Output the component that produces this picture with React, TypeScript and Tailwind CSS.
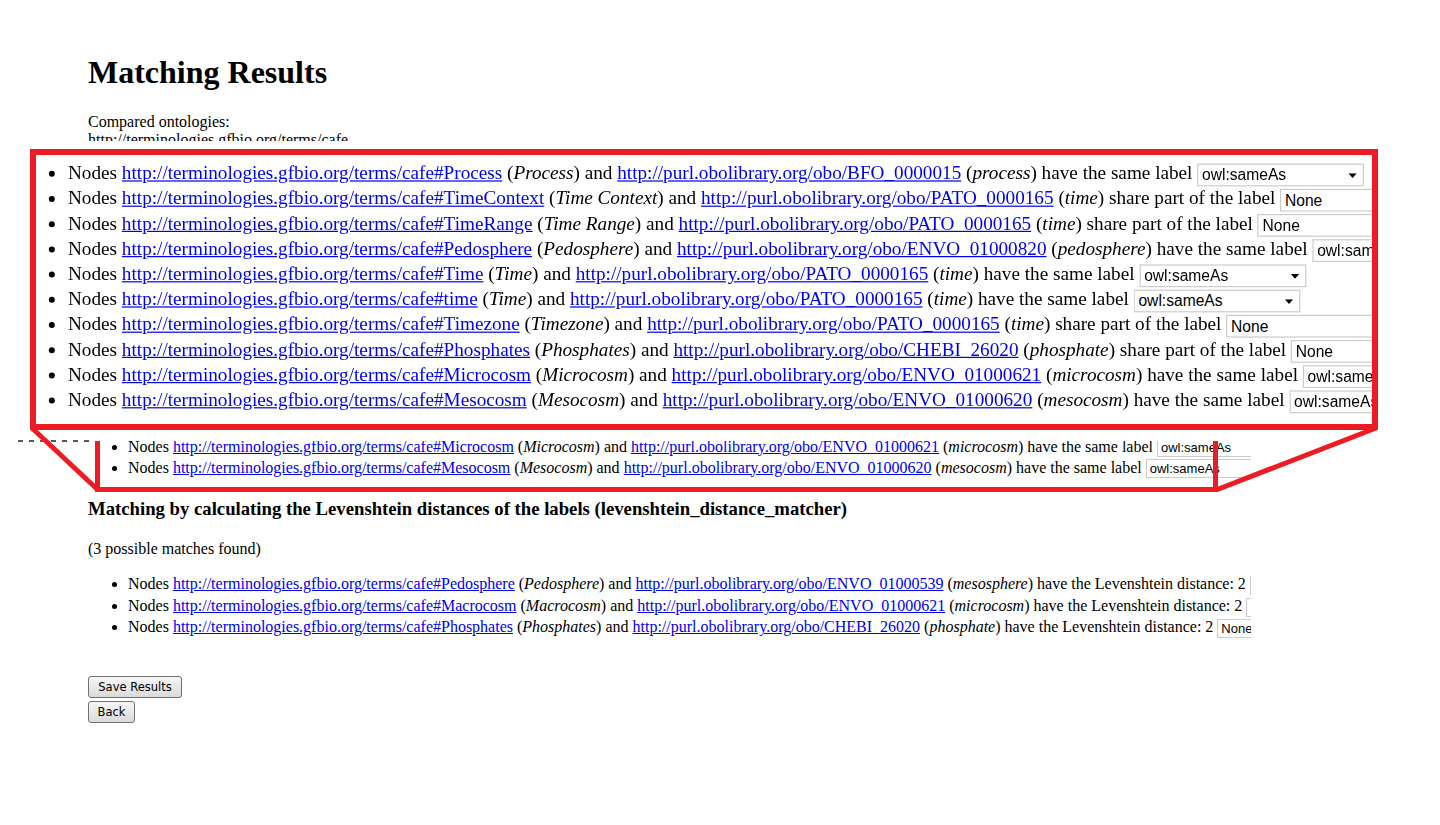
import React from 'react'

const CAFE = 'http://terminologies.gfbio.org/terms/cafe#'
const OBO = 'http://purl.obolibrary.org/obo/'

type Match = {
  id: string
  label: string
  target: string
  tlabel: string
  text: string
  value: string
}

const labelMatches: Match[] = [
  { id: 'Process', label: 'Process', target: 'BFO_0000015', tlabel: 'process', text: 'have the same label', value: 'owl:sameAs' },
  { id: 'TimeContext', label: 'Time Context', target: 'PATO_0000165', tlabel: 'time', text: 'share part of the label', value: 'None' },
  { id: 'TimeRange', label: 'Time Range', target: 'PATO_0000165', tlabel: 'time', text: 'share part of the label', value: 'None' },
  { id: 'Pedosphere', label: 'Pedosphere', target: 'ENVO_01000820', tlabel: 'pedosphere', text: 'have the same label', value: 'owl:sameAs' },
  { id: 'Time', label: 'Time', target: 'PATO_0000165', tlabel: 'time', text: 'have the same label', value: 'owl:sameAs' },
  { id: 'time', label: 'Time', target: 'PATO_0000165', tlabel: 'time', text: 'have the same label', value: 'owl:sameAs' },
  { id: 'Timezone', label: 'Timezone', target: 'PATO_0000165', tlabel: 'time', text: 'share part of the label', value: 'None' },
  { id: 'Phosphates', label: 'Phosphates', target: 'CHEBI_26020', tlabel: 'phosphate', text: 'share part of the label', value: 'None' },
  { id: 'Microcosm', label: 'Microcosm', target: 'ENVO_01000621', tlabel: 'microcosm', text: 'have the same label', value: 'owl:sameAs' },
  { id: 'Mesocosm', label: 'Mesocosm', target: 'ENVO_01000620', tlabel: 'mesocosm', text: 'have the same label', value: 'owl:sameAs' },
]

const levenshteinMatches: Match[] = [
  { id: 'Pedosphere', label: 'Pedosphere', target: 'ENVO_01000539', tlabel: 'mesosphere', text: 'have the Levenshtein distance: 2', value: 'None' },
  { id: 'Macrocosm', label: 'Macrocosm', target: 'ENVO_01000621', tlabel: 'microcosm', text: 'have the Levenshtein distance: 2', value: 'None' },
  { id: 'Phosphates', label: 'Phosphates', target: 'CHEBI_26020', tlabel: 'phosphate', text: 'have the Levenshtein distance: 2', value: 'None' },
]

function FakeSelect({ value }: { value: string }) {
  return (
    <span className="relative inline-block align-middle w-[139px] h-[19px] border border-[#cccccc] bg-white pl-[3px] font-['Liberation_Sans',Arial,sans-serif] text-[13px] leading-[17px] text-black">
      {value}
      <svg className="absolute right-[5px] top-[7px]" width="7" height="4" viewBox="0 0 7 4">
        <polygon points="0,0 7,0 3.5,4" fill="#000" />
      </svg>
    </span>
  )
}

function MatchRow({ m, h, hidden = false }: { m: Match; h: string; hidden?: boolean }) {
  return (
    <li className={`${h} whitespace-nowrap ${hidden ? 'invisible' : ''}`}>
      Nodes{' '}
      <a href="#" className="text-[#0000ee] underline">{CAFE + m.id}</a> (<i>{m.label}</i>) and{' '}
      <a href="#" className="text-[#0000ee] underline">{OBO + m.target}</a> (<i>{m.tlabel}</i>) {m.text}{' '}
      <FakeSelect value={m.value} />
    </li>
  )
}

// rows covered by the callout are kept in the flow but not painted
function LabelList({ className = '', coveredRows = 0 }: { className?: string; coveredRows?: number }) {
  return (
    <ul className={`list-disc pl-10 ${className}`}>
      {labelMatches.map((m, i) => (
        <MatchRow key={m.id} m={m} h="h-[21px] leading-[21px]" hidden={i < coveredRows} />
      ))}
    </ul>
  )
}

export default function App() {
  return (
    <div className="relative w-[1440px] h-[825px] overflow-hidden bg-white text-black font-['Liberation_Serif','Times_New_Roman',serif]">
      {/* page */}
      <div className="w-[1251px] overflow-hidden pl-[88px] pt-[54px] text-[16px] leading-[18.4px]">
        <h1 className="text-[32px] leading-[37px] font-bold">Matching Results</h1>
        <p className="mt-[22px]">
          Compared ontologies:
          <br />
          http://terminologies.gfbio.org/terms/cafe
          <br />
          <span className="invisible">http://purl.obolibrary.org/obo/</span>
        </p>
        <div className="invisible">
          <h3 className="mt-[18.7px] text-[18.72px] leading-[21.5px] font-bold">
            Matching by comparing the labels (label_matcher)
          </h3>
          <p className="mt-[18.7px]">(10 possible matches found)</p>
        </div>
        <LabelList className="mt-[22px]" coveredRows={8} />

        <h3 className="mt-[20px] text-[18.72px] leading-[21.5px] font-bold">
          Matching by calculating the Levenshtein distances of the labels (levenshtein_distance_matcher)
        </h3>
        <p className="mt-[21px]">(3 possible matches found)</p>
        <ul className="mt-[15px] list-disc pl-10">
          {levenshteinMatches.map((m) => (
            <MatchRow key={m.id} m={m} h="h-[21.5px] leading-[21.5px]" />
          ))}
        </ul>

        <div className="mt-[38px] flex flex-col items-start gap-[3px] font-['DejaVu_Sans',Verdana,sans-serif] text-[11.5px]">
          <button className="w-[94px] h-[22px] rounded-[3px] border border-[#707070] bg-gradient-to-b from-[#f6f6f6] to-[#dadada] text-black">
            Save Results
          </button>
          <button className="w-[47px] h-[22px] rounded-[3px] border border-[#707070] bg-gradient-to-b from-[#f6f6f6] to-[#dadada] text-black">
            Back
          </button>
        </div>
      </div>

      {/* small selection frame around the original rows */}
      <div className="absolute left-[95px] top-[441px] w-[1123px] h-[51px] border-x-[5px] border-b-[5px] border-[#ed1c24]" />

      {/* magnified callout */}
      <div className="absolute left-[20px] top-[141px] w-[1368px] h-[300px] bg-white pt-[8px] pl-[10px]">
        <div className="relative w-[1348px] h-[281px] border-[6px] border-[#ed1c24] bg-white overflow-hidden">
          <div className="absolute left-[-16px] top-[5.4px] w-[1500px] origin-top-left scale-[1.2] text-[16px] leading-[18.4px]">
            <LabelList />
          </div>
        </div>
      </div>

      <svg className="absolute inset-0 pointer-events-none" width="1440" height="825" viewBox="0 0 1440 825">
        <line x1="18" y1="441" x2="94" y2="441" stroke="#222" strokeWidth="1.5" strokeDasharray="5 6" />
        <line x1="32" y1="428" x2="98" y2="490" stroke="#ed1c24" strokeWidth="5" />
        <line x1="1376" y1="428" x2="1216" y2="490" stroke="#ed1c24" strokeWidth="5" />
      </svg>
    </div>
  )
}
